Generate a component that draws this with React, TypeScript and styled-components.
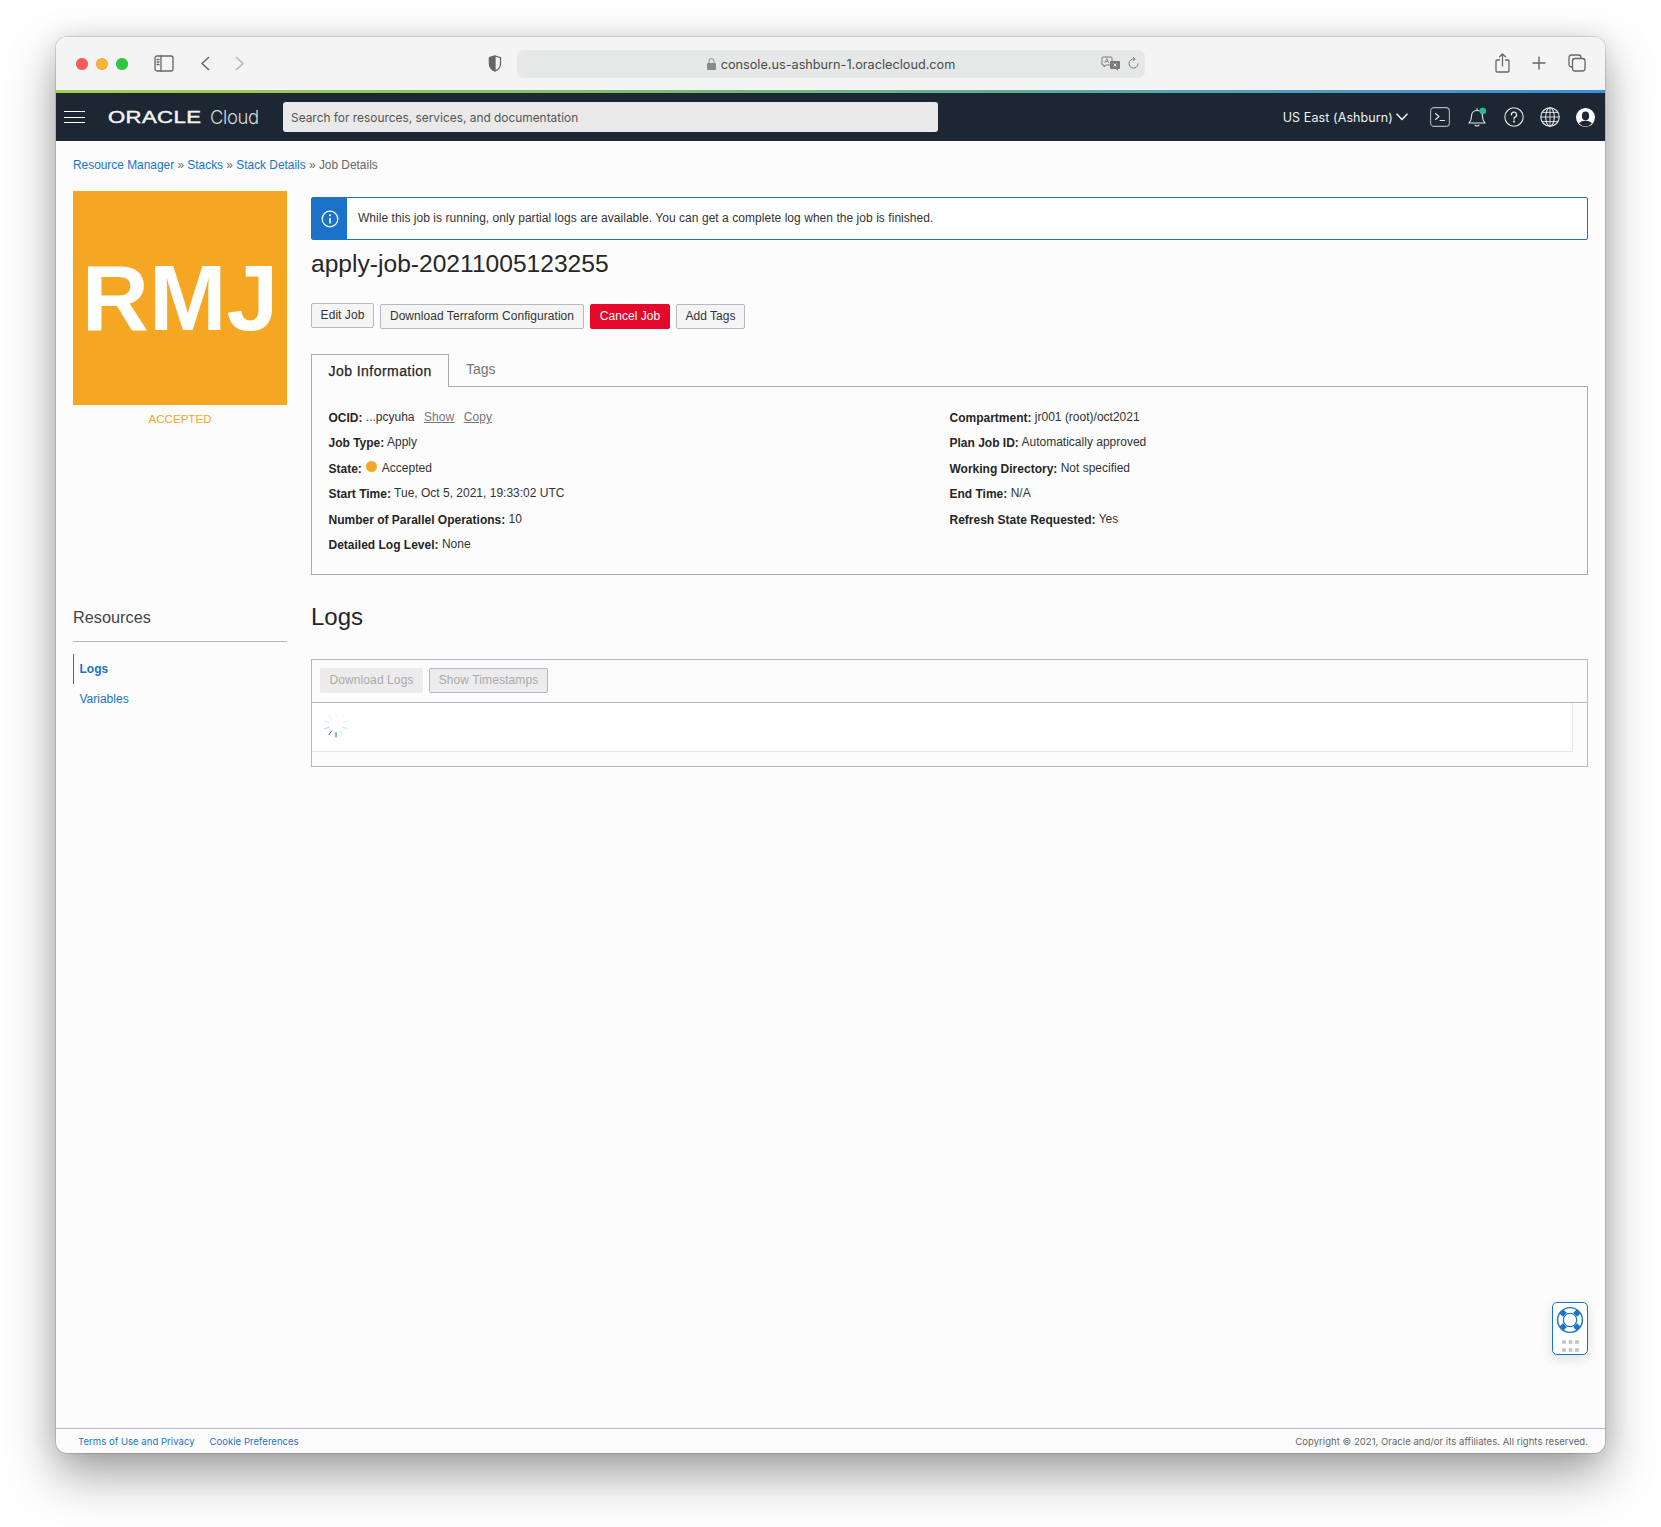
import React from "react";
import styled, { createGlobalStyle } from "styled-components";

const GlobalStyle = createGlobalStyle`
  html, body { margin: 0; padding: 0; background: #fff; }
  body { font-family: "Liberation Sans", Arial, sans-serif; color: #262626; }
  * { box-sizing: border-box; }
`;

const Page = styled.div`
  width: 1661px;
  height: 1527px;
  padding: 37px 56px 0;
  overflow: hidden;
  background: #fefefe;
`;

const Window = styled.div`
  width: 1549px;
  height: 1416px;
  display: flex;
  flex-direction: column;
  border-radius: 11px;
  overflow: hidden;
  background: #fcfcfc;
  box-shadow: 0 0 0 1px rgba(0, 0, 0, 0.12), 0 22px 48px rgba(0, 0, 0, 0.36), 0 0 24px rgba(0, 0, 0, 0.1);
`;

const BrowserBar = styled.div`
  height: 53px;
  flex: none;
  display: flex;
  align-items: center;
  padding: 0 19px 0 20px;
  background: #f3f4f3;
  color: #666;
`;

const Light = styled.span<{ $color: string }>`
  width: 12px;
  height: 12px;
  border-radius: 50%;
  margin-right: 8px;
  background: ${(p) => p.$color};
  box-shadow: inset 0 0 0 0.5px rgba(0, 0, 0, 0.12);
`;

const BarIcon = styled.svg<{ $left: number }>`
  flex: none;
  display: block;
  margin-left: ${(p) => p.$left}px;
  fill: none;
  stroke: currentColor;
  stroke-width: 1.3;
  stroke-linecap: round;
  stroke-linejoin: round;
`;

const UrlBar = styled.div`
  position: relative;
  width: 628px;
  height: 28px;
  margin-left: 15px;
  padding-top: 1px;
  display: flex;
  align-items: center;
  justify-content: center;
  gap: 5px;
  border-radius: 7px;
  background: #e6e8e7;
  color: #4a4a4a;
  font: 12.7px/27px Inter, "Noto Sans", sans-serif;
`;

const UrlActions = styled.div`
  position: absolute;
  right: 6px;
  top: 6px;
  display: flex;
  gap: 8px;
  color: #7a7a7a;
`;

const BarRight = styled.div`
  margin-left: auto;
  display: flex;
  align-items: center;
  transform: translateY(-1px);
`;

const AccentLine = styled.div`
  height: 3px;
  flex: none;
  background: linear-gradient(90deg, #a4d34a 0%, #79bb72 40%, #5aa6ad 70%, #3c8edb 100%);
`;

const NavBar = styled.header`
  height: 48px;
  flex: none;
  display: flex;
  align-items: center;
  padding: 0 10px 0 8px;
  background: #1c2733;
  color: #f2f2f2;
`;

const Hamburger = styled.button`
  width: 21px;
  height: 12px;
  padding: 0;
  border: 0;
  border-top: 1px solid #fff;
  border-bottom: 1px solid #fff;
  background: linear-gradient(#fff, #fff) center / 100% 1px no-repeat;
`;

const Logo = styled.div`
  width: 151px;
  margin-left: 23px;
  display: flex;
  align-items: center;
`;

const LogoWord = styled.span`
  display: inline-block;
  width: 102px;
  font: 400 16.5px/20px "Liberation Sans", sans-serif;
  -webkit-text-stroke: 0.45px #f2f2f2;
  letter-spacing: 0.3px;
  transform: scaleX(1.34);
  transform-origin: left center;
`;

const LogoCloud = styled.span`
  font: 300 18.5px/20px Inter, sans-serif;
  color: #d8dadc;
  letter-spacing: -0.4px;
`;

const SearchBox = styled.div`
  width: 655px;
  height: 30px;
  margin-left: 24px;
  padding-left: 8px;
  border-radius: 3px;
  background: #e9e9e9;
  color: #555;
  font: 11.9px/31px Inter, "Noto Sans", sans-serif;
`;

const NavRight = styled.div`
  margin-left: auto;
  display: flex;
  align-items: center;
`;

const Region = styled.span`
  margin: 1px 3px 0 0;
  font: 12.5px/22px Inter, "Noto Sans", sans-serif;
  letter-spacing: 0.1px;
`;

const NavIcon = styled.svg<{ $left: number }>`
  flex: none;
  display: block;
  margin-left: ${(p) => p.$left}px;
  fill: none;
  stroke: #e8e8e8;
  stroke-width: 1.1;
  stroke-linecap: round;
  stroke-linejoin: round;
`;

const Content = styled.main`
  position: relative;
  flex: 1;
  padding: 16px 17px 0;
  font-size: 12px;
`;

const Breadcrumb = styled.nav`
  height: 16px;
  font-size: 11.9px;
  line-height: 16px;
  color: #666;
`;

const Crumb = styled.a`
  color: #1a73c9;
  text-decoration: none;
`;

const Layout = styled.div`
  display: grid;
  grid-template-columns: 214px 1277px;
  column-gap: 24px;
  margin-top: 18px;
`;

const Tile = styled.div`
  width: 214px;
  height: 214px;
  display: flex;
  align-items: center;
  justify-content: center;
  background: #f5a623;
  color: #fff;
  font: 700 93px/1 "Liberation Sans", sans-serif;
`;

const TileState = styled.div`
  margin-top: 7px;
  text-align: center;
  color: #f5a623;
  font-size: 11.6px;
  line-height: 14px;
`;

const InfoBanner = styled.div`
  display: flex;
  height: 43px;
  margin-top: 6px;
  border: 1px solid #1a73c9;
  border-radius: 2px;
  background: #fff;
`;

const InfoIcon = styled.div`
  width: 35px;
  display: flex;
  align-items: center;
  justify-content: center;
  background: #1a73c9;
`;

const InfoText = styled.div`
  margin-left: 11px;
  line-height: 40px;
  font-size: 12px;
  letter-spacing: 0.045px;
  color: #333;
`;

const JobTitle = styled.h1`
  margin: 9px 0 0;
  height: 30px;
  font-size: 24.6px;
  line-height: 30px;
  font-weight: 400;
  color: #262626;
`;

const Actions = styled.div`
  display: flex;
  gap: 6px;
  margin-top: 25px;
`;

const Button = styled.button<{ $danger?: boolean; $raised?: boolean; $w: number }>`
  width: ${(p) => p.$w}px;
  height: 25px;
  padding: 0;
  border: 1px solid ${(p) => (p.$danger ? "#e4092a" : "#b5b9c2")};
  border-radius: 2px;
  background: ${(p) => (p.$danger ? "#e4092a" : "#f5f5f6")};
  color: ${(p) => (p.$danger ? "#fff" : "#333")};
  font: 12px/23px "Liberation Sans", sans-serif;
  letter-spacing: 0.05px;
  transform: ${(p) => (p.$raised ? "translateY(-1px)" : "none")};
`;

const Tabs = styled.div`
  display: flex;
  height: 33px;
  margin-top: 25px;
  border-bottom: 1px solid #aaa;
`;

const Tab = styled.div<{ $active?: boolean }>`
  height: 33px;
  padding: ${(p) => (p.$active ? "0 0 0 16.5px" : "0 16px")};
  width: ${(p) => (p.$active ? "138px" : "auto")};
  border: 1px solid ${(p) => (p.$active ? "#aaa" : "transparent")};
  border-bottom: 0;
  background: ${(p) => (p.$active ? "#fcfcfc" : "transparent")};
  color: ${(p) => (p.$active ? "#262626" : "#777")};
  font-size: 14px;
  line-height: ${(p) => (p.$active ? "33px" : "28px")};
  letter-spacing: ${(p) => (p.$active ? "0.45px" : "0")};
  -webkit-text-stroke: ${(p) => (p.$active ? "0.25px" : "0")};
  z-index: 1;
`;

const InfoPanel = styled.section`
  display: grid;
  grid-template-columns: 621px 1fr;
  height: 188px;
  padding: 18px 16px 0 16.5px;
  border: 1px solid #aaa;
  border-top: 0;
`;

const InfoRow = styled.div`
  height: 25.4px;
  line-height: 25.4px;
  color: #333;
  white-space: nowrap;
`;

const Label = styled.b`
  color: #262626;
  position: relative;
  top: 1px;
`;

const Muted = styled.a`
  margin-left: 6px;
  color: #777;
  text-decoration: underline;
  letter-spacing: 0.1px;
`;

const StateDot = styled.span`
  display: inline-block;
  width: 11px;
  height: 11px;
  margin: 0 2px 0 1px;
  border-radius: 50%;
  background: #f5a623;
`;

const SideTitle = styled.h3`
  margin: 28px 0 0;
  height: 39px;
  font-size: 16.3px;
  line-height: 28px;
  font-weight: 400;
  color: #444;
  border-bottom: 1px solid #b5b9c2;
`;

const SideList = styled.div`
  margin-top: 12px;
`;

const SideItem = styled.a<{ $active?: boolean }>`
  display: block;
  height: 30px;
  padding-left: 5.5px;
  border-left: 1px solid ${(p) => (p.$active ? "#1a73c9" : "transparent")};
  color: #1a73c9;
  font-size: 12px;
  font-weight: ${(p) => (p.$active ? 700 : 400)};
  line-height: 31px;
`;

const SectionTitle = styled.h2`
  margin: 27px 0 0;
  height: 30px;
  font-size: 24px;
  line-height: 30px;
  font-weight: 400;
  color: #262626;
`;

const LogPanel = styled.section`
  height: 108px;
  margin-top: 27px;
  border: 1px solid #b5b9c2;
`;

const LogToolbar = styled.div`
  height: 43px;
  display: flex;
  gap: 6px;
  padding: 8px 8px 0;
  border-bottom: 1px solid #b5b9c2;
`;

const GhostButton = styled.button<{ $outlined?: boolean; $w: number }>`
  width: ${(p) => p.$w}px;
  height: 25px;
  padding: 0;
  border: 1px solid ${(p) => (p.$outlined ? "#b5b9c2" : "#ececec")};
  border-radius: 2px;
  background: #ececec;
  color: #aaa;
  font: 12px/23px "Liberation Sans", sans-serif;
  letter-spacing: 0.1px;
`;

const LogBody = styled.div`
  height: 49px;
  margin-right: 14px;
  padding: 7px 0 0 11px;
  background: #fff;
  border-right: 1px solid #e6e6e6;
  border-bottom: 1px solid #e6e6e6;
`;

const HelpWidget = styled.div`
  position: absolute;
  right: 17px;
  top: 1161px;
  width: 36px;
  height: 53px;
  padding: 3px 0 0 2px;
  border: 1px solid #1a73c9;
  border-radius: 5px;
  background: #fff;
  box-shadow: 0 4px 12px rgba(0, 0, 0, 0.12);
`;

const Footer = styled.footer`
  height: 25px;
  flex: none;
  display: flex;
  align-items: center;
  padding: 1px 17px 0 22px;
  border-top: 1px solid #b5bcc8;
  font: 9.5px/24px Inter, "Noto Sans", sans-serif;
  letter-spacing: 0.04px;
`;

const FooterLink = styled.a`
  color: #1a73c9;
  margin-right: 15px;
`;

const Copyright = styled.span`
  margin-left: auto;
  color: #666;
`;

const SPINNER_TICKS = [1, 0.65, 0.35, 0.2, 0.12, 0.08, 0.08, 0.12, 0.2, 0.25, 0.4, 0.7];

const Spinner = () => (
  <svg width="26" height="30" viewBox="-13 -15 26 30" fill="none" stroke="#1a73c9" strokeWidth="0.9" strokeLinecap="round">
    {SPINNER_TICKS.map((opacity, i) => (
      <line key={i} x1="0" y1="7.500" x2="0" y2="12" opacity={opacity} transform={`rotate(${i * 36})`} />
    ))}
  </svg>
);

const rows = {
  left: [
    ["Job Type:", "Apply"],
    ["Start Time:", "Tue, Oct 5, 2021, 19:33:02 UTC"],
    ["Number of Parallel Operations:", "10"],
    ["Detailed Log Level:", "None"],
  ],
  right: [
    ["Compartment:", "jr001 (root)/oct2021"],
    ["Plan Job ID:", "Automatically approved"],
    ["Working Directory:", "Not specified"],
    ["End Time:", "N/A"],
    ["Refresh State Requested:", "Yes"],
  ],
};

const Row = ({ label, value }: { label: string; value: string }) => (
  <InfoRow>
    <Label>{label}</Label> {value}
  </InfoRow>
);

export default function App() {
  return (
    <Page>
      <GlobalStyle />
      <Window>
        <BrowserBar>
          <Light $color="#fb5a57" />
          <Light $color="#fdb431" />
          <Light $color="#2cc840" />
          <BarIcon $left={18} width="20" height="17" viewBox="0 0 20 17">
            <rect x="1" y="1" width="18" height="15" rx="2" />
            <path d="M7 1v15" />
            <path d="M3 4.500h2M3 7h2M3 9.500h2" />
          </BarIcon>
          <BarIcon $left={26} width="10" height="15" viewBox="0 0 10 15">
            <path d="M8.500 1.500 2 7.500l6.500 6" strokeWidth="1.6" />
          </BarIcon>
          <BarIcon $left={25} width="10" height="15" viewBox="0 0 10 15" color="#b5b5b5">
            <path d="M1.500 1.500 8 7.500l-6.500 6" strokeWidth="1.6" />
          </BarIcon>
          <BarIcon $left={243} width="14" height="17" viewBox="0 0 14 17">
            <path d="M7 1 1.500 2.700v6C1.500 12.500 4.500 15 7 16c2.500-1 5.500-3.500 5.500-7.300v-6z" />
            <path d="M7 1 1.500 2.700v6C1.500 12.500 4.500 15 7 16z" fill="currentColor" />
          </BarIcon>
          <UrlBar>
            <svg width="9" height="12" viewBox="0 0 9 12" fill="#8a8a8a">
              <rect x="0" y="5" width="9" height="7" rx="1" />
              <path d="M2 5V3.200a2.500 2.500 0 0 1 5 0V5" fill="none" stroke="#8a8a8a" strokeWidth="1" />
            </svg>
            console.us-ashburn-1.oraclecloud.com
            <UrlActions>
              <svg width="19" height="15" viewBox="0 0 19 15" fill="none" stroke="currentColor" strokeWidth="1">
                <path d="M2 1h8a1 1 0 0 1 1 1v6a1 1 0 0 1-1 1H5L3 11V9H2a1 1 0 0 1-1-1V2a1 1 0 0 1 1-1z" />
                <path d="m3.800 7 2-4.500 2 4.500M4.500 5.500h2.600" strokeWidth="0.8" />
                <path d="M10 5h8a1 1 0 0 1 1 1v6a1 1 0 0 1-1 1h-1v2l-2-2h-5a1 1 0 0 1-1-1V6a1 1 0 0 1 1-1z" fill="currentColor" stroke="none" />
                <path d="m12.500 7.500 3 3M15.500 7.500l-3 3" stroke="#e6e8e7" />
              </svg>
              <svg width="11" height="15" viewBox="0 0 11 15" fill="none" stroke="currentColor" strokeWidth="1">
                <path d="M6.500 3.200A4.500 4.500 0 1 0 10 7.500" />
                <path d="M5 1l2 2.200L5 5.300" />
              </svg>
            </UrlActions>
          </UrlBar>
          <BarRight>
            <BarIcon $left={0} width="15" height="20" viewBox="0 0 15 20">
              <path d="M4.500 7H2a1 1 0 0 0-1 1v10a1 1 0 0 0 1 1h11a1 1 0 0 0 1-1V8a1 1 0 0 0-1-1h-2.500" />
              <path d="M7.500 13V1M4.500 3.800 7.500 1l3 2.800" />
            </BarIcon>
            <BarIcon $left={22} width="14" height="14" viewBox="0 0 14 14">
              <path d="M7 1v12M1 7h12" strokeWidth="1.4" />
            </BarIcon>
            <BarIcon $left={22} width="18" height="18" viewBox="0 0 18 18">
              <rect x="1" y="1" width="12" height="12" rx="2.500" />
              <rect x="4.500" y="4.500" width="12.500" height="12.500" rx="2.500" fill="#f3f4f3" />
            </BarIcon>
          </BarRight>
        </BrowserBar>
        <AccentLine />
        <NavBar>
          <Hamburger aria-label="Menu" />
          <Logo>
            <LogoWord>ORACLE</LogoWord>
            <LogoCloud>Cloud</LogoCloud>
          </Logo>
          <SearchBox>Search for resources, services, and documentation</SearchBox>
          <NavRight>
            <Region>US East (Ashburn)</Region>
            <NavIcon $left={0} width="12" height="8" viewBox="0 0 12 8">
              <path d="M1 1.200 6 6.500l5-5.300" strokeWidth="1.6" />
            </NavIcon>
            <NavIcon $left={22} width="20" height="20" viewBox="0 0 20 20">
              <rect x="0.600" y="0.600" width="18.800" height="18.800" rx="3.500" stroke="#aeb3b8" />
              <path d="m5.500 6.500 3.500 3-3.500 3M10 13.500h4.500" />
            </NavIcon>
            <NavIcon $left={18} width="19" height="21" viewBox="0 0 19 21">
              <path d="M1 16c1.500-1.500 2.500-2.500 2.500-6.500C3.500 6 5.500 3.500 9 3.500s5.500 2.500 5.500 6c0 4 1 5 2.500 6.500z" />
              <path d="M7 18c.5 1.300 3.500 1.300 4 0M9 3.500V1.500" />
              <circle cx="14.800" cy="4" r="3.300" fill="#2bb795" stroke="none" />
            </NavIcon>
            <NavIcon $left={17} width="20" height="20" viewBox="0 0 20 20">
              <circle cx="10" cy="10" r="9.200" />
              <path d="M7.400 7.800A2.600 2.600 0 1 1 11 10.200c-.8.400-1 .9-1 1.800" strokeWidth="1.300" />
              <circle cx="10" cy="14.600" r="0.500" />
            </NavIcon>
            <NavIcon $left={16} width="20" height="20" viewBox="0 0 20 20">
              <circle cx="10" cy="10" r="9.200" />
              <ellipse cx="10" cy="10" rx="4.300" ry="9.200" />
              <path d="M10 .8v18.400M.8 10h18.400M2.300 5.400h15.400M2.300 14.600h15.400" strokeWidth="0.9" />
            </NavIcon>
            <NavIcon $left={16} width="19" height="19" viewBox="0 0 19 19">
              <circle cx="9.500" cy="9.500" r="9.500" fill="#fff" stroke="none" />
              <ellipse cx="9.500" cy="8" rx="3.600" ry="4.400" fill="#1c2733" stroke="none" />
              <path d="M3 15.600c1.500-2.300 4-2.900 6.500-2.900s5 .6 6.500 2.900a9 9 0 0 1-13 0z" fill="#1c2733" stroke="none" />
            </NavIcon>
          </NavRight>
        </NavBar>
        <Content>
          <Breadcrumb>
            <Crumb>Resource Manager</Crumb> » <Crumb>Stacks</Crumb> » <Crumb>Stack Details</Crumb> » Job Details
          </Breadcrumb>
          <Layout>
            <div>
              <Tile>RMJ</Tile>
              <TileState>ACCEPTED</TileState>
            </div>
            <div>
              <InfoBanner>
                <InfoIcon>
                  <svg width="18" height="18" viewBox="0 0 18 18" fill="none" stroke="#fff" strokeWidth="1.200">
                    <circle cx="9" cy="9" r="7.800" />
                    <path d="M9 8v5.500" strokeWidth="1.600" />
                    <circle cx="9" cy="5.300" r="0.500" strokeWidth="1.200" />
                  </svg>
                </InfoIcon>
                <InfoText>While this job is running, only partial logs are available. You can get a complete log when the job is finished.</InfoText>
              </InfoBanner>
              <JobTitle>apply-job-20211005123255</JobTitle>
              <Actions>
                <Button $w={63} $raised>Edit Job</Button>
                <Button $w={204}>Download Terraform Configuration</Button>
                <Button $w={80} $danger>Cancel Job</Button>
                <Button $w={69}>Add Tags</Button>
              </Actions>
              <Tabs>
                <Tab $active>Job Information</Tab>
                <Tab>Tags</Tab>
              </Tabs>
              <InfoPanel>
                <div>
                  <InfoRow>
                    <Label>OCID:</Label> ...pcyuha <Muted>Show</Muted> <Muted>Copy</Muted>
                  </InfoRow>
                  <Row label={rows.left[0][0]} value={rows.left[0][1]} />
                  <InfoRow>
                    <Label>State:</Label> <StateDot /> Accepted
                  </InfoRow>
                  {rows.left.slice(1).map(([label, value]) => (
                    <Row key={label} label={label} value={value} />
                  ))}
                </div>
                <div>
                  {rows.right.map(([label, value]) => (
                    <Row key={label} label={label} value={value} />
                  ))}
                </div>
              </InfoPanel>
            </div>
            <aside>
              <SideTitle>Resources</SideTitle>
              <SideList>
                <SideItem $active>Logs</SideItem>
                <SideItem>Variables</SideItem>
              </SideList>
            </aside>
            <div>
              <SectionTitle>Logs</SectionTitle>
              <LogPanel>
                <LogToolbar>
                  <GhostButton $w={103}>Download Logs</GhostButton>
                  <GhostButton $w={119} $outlined>Show Timestamps</GhostButton>
                </LogToolbar>
                <LogBody>
                  <Spinner />
                </LogBody>
              </LogPanel>
            </div>
          </Layout>
          <HelpWidget>
            <svg width="30" height="46" viewBox="0 0 30 46" fill="none">
              <circle cx="15" cy="14" r="12.400" stroke="#1a73c9" strokeWidth="1.400" />
              <circle cx="15" cy="14" r="6.600" stroke="#1a73c9" strokeWidth="1.400" />
              <path d="M9.800 8.800 6.500 5.500M20.200 8.800l3.300-3.300M9.800 19.200l-3.300 3.300M20.200 19.200l3.300 3.300" stroke="#1a73c9" strokeWidth="5.500" />
              <circle cx="15" cy="14" r="5.900" fill="#fff" />
              {[36, 44].flatMap((y) =>
                [9, 15.500, 22].map((x) => <rect key={`${x}-${y}`} x={x - 1.800} y={y - 1.800} width="3.600" height="3.600" fill="#c0c2c6" />)
              )}
            </svg>
          </HelpWidget>
        </Content>
        <Footer>
          <FooterLink>Terms of Use and Privacy</FooterLink>
          <FooterLink>Cookie Preferences</FooterLink>
          <Copyright>Copyright © 2021, Oracle and/or its affiliates. All rights reserved.</Copyright>
        </Footer>
      </Window>
    </Page>
  );
}
